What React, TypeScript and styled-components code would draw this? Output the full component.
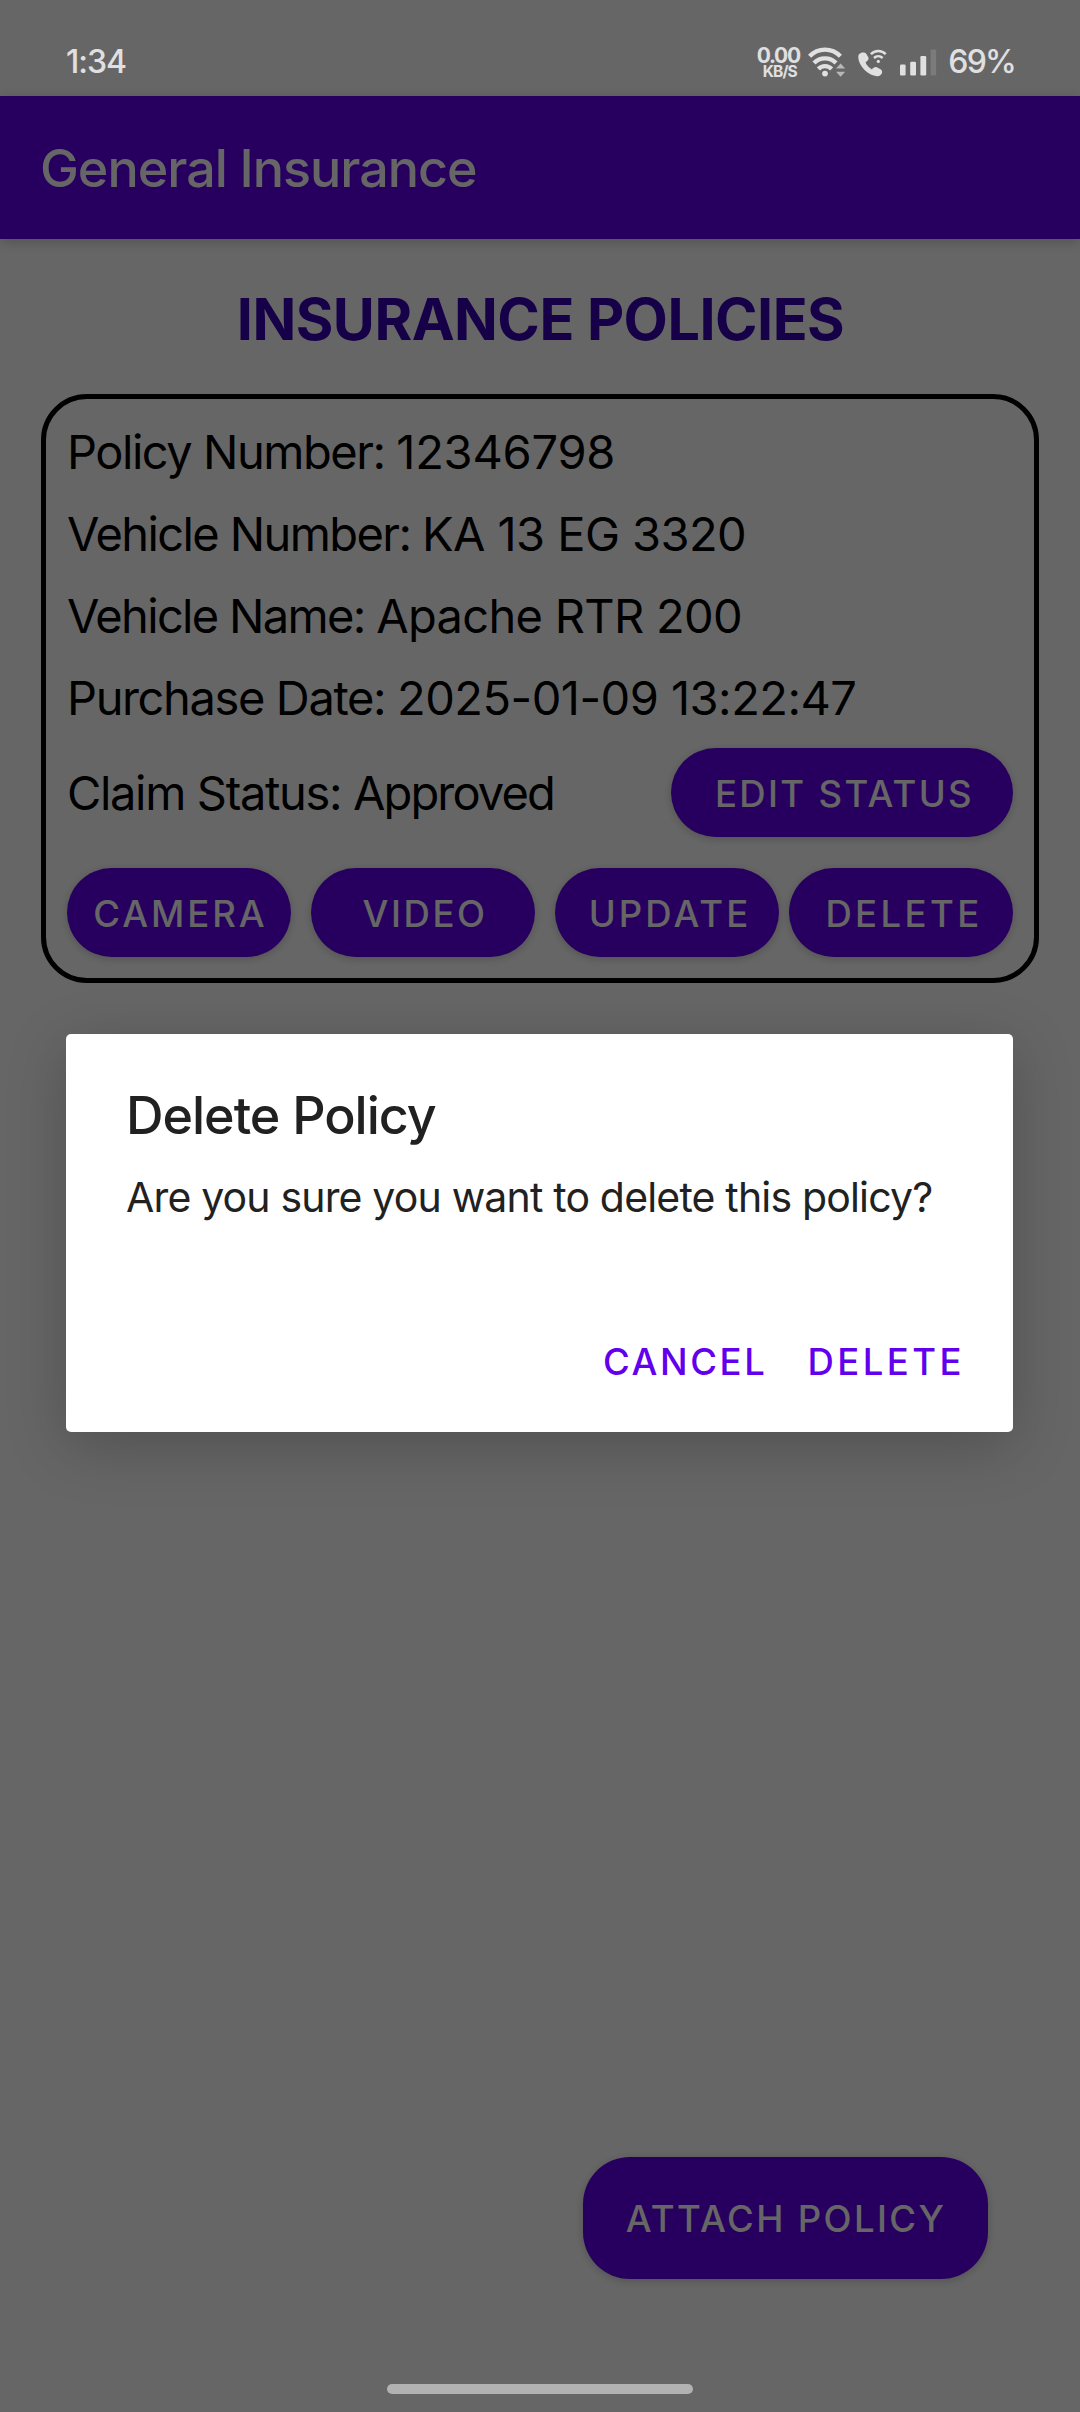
import React from "react";
import styled, { createGlobalStyle } from "styled-components";

const GlobalStyle = createGlobalStyle`
  * { box-sizing: border-box; }
  body { margin: 0; background: #fff; }
`;

const Screen = styled.div`
  position: relative;
  display: flex;
  flex-direction: column;
  width: 1080px;
  height: 2412px;
  overflow: hidden;
  background: #fff;
  color: #000;
  font-family: Inter, "Liberation Sans", sans-serif;
`;

const StatusBar = styled.header`
  position: relative;
  z-index: 2;
  display: flex;
  align-items: center;
  justify-content: space-between;
  height: 96px;
  padding: 27px 65px 0 66px;
  color: #e0e0e0;
`;

const StatusText = styled.span<{ $spacing: number }>`
  font-size: 32px;
  font-weight: 500;
  line-height: 40px;
  letter-spacing: ${(p) => p.$spacing}px;
  white-space: nowrap;
`;

const StatusIcons = styled.div`
  display: flex;
  align-items: center;
`;

const Speed = styled.div`
  display: flex;
  flex-direction: column;
  align-items: center;
  width: 44px;
  margin-right: 8px;
  padding-top: 3px;
  font-weight: 700;
  white-space: nowrap;
`;

const SpeedValue = styled.span`
  font-size: 21px;
  line-height: 16px;
  letter-spacing: -1.3px;
`;

const SpeedUnit = styled.span`
  padding-left: 3px;
  font-size: 15.5px;
  line-height: 15px;
  letter-spacing: -0.9px;
`;

const Icon = styled.svg<{ $after: number }>`
  display: block;
  flex: none;
  margin-right: ${(p) => p.$after}px;
`;

const AppBar = styled.div`
  display: flex;
  align-items: center;
  flex: none;
  height: 143px;
  padding: 1px 0 0 40px;
  background: #6200ee;
  box-shadow: 0 3px 12px rgba(0, 0, 0, 0.2);
`;

const AppTitle = styled.h1`
  margin: 0;
  color: #fff;
  font-size: 52px;
  font-weight: 500;
  letter-spacing: -1px;
  white-space: nowrap;
`;

const Heading = styled.h2`
  margin: 50px 0 45px;
  padding-left: 1px;
  color: #3700b3;
  font-size: 57.5px;
  font-weight: 700;
  line-height: 60px;
  letter-spacing: -0.52px;
  text-align: center;
  white-space: nowrap;
`;

const PolicyCard = styled.section`
  margin: 0 41px;
  padding: 12px 21px 21px;
  border: 5px solid #000;
  border-radius: 46px;
`;

const FieldLine = styled.div`
  font-size: 47px;
  line-height: 82px;
  white-space: pre;
`;

const FieldPart = styled.span<{ $spacing: number }>`
  letter-spacing: ${(p) => p.$spacing}px;
`;

const ClaimRow = styled.div`
  display: flex;
  align-items: center;
  justify-content: space-between;
  height: 89px;
  margin-top: 9px;
`;

const Actions = styled.div`
  display: grid;
  grid-template-columns: 224px 224px 224px 224px;
  column-gap: 20px;
  margin-top: 31px;

  & > :last-child {
    margin-left: -10px;
    margin-right: 10px;
  }
`;

const Button = styled.button<{ $spacing: number; $shift?: number; $width: number; $tall?: boolean }>`
  display: flex;
  align-items: center;
  justify-content: center;
  width: ${(p) => p.$width}px;
  height: ${(p) => (p.$tall ? 122 : 89)}px;
  padding: ${(p) => (p.$tall ? 1 : 2)}px 0 0 ${(p) => p.$shift ?? 0}px;
  border: 0;
  border-radius: ${(p) => (p.$tall ? 47 : 44.5)}px;
  background: #6200ee;
  box-shadow: 0 2px 8px rgba(0, 0, 0, 0.2);
  color: #fff;
  font-family: inherit;
  font-size: 36.5px;
  font-weight: 500;
  letter-spacing: ${(p) => p.$spacing}px;
  white-space: nowrap;
`;

const Footer = styled.footer`
  display: flex;
  justify-content: flex-end;
  margin-top: auto;
  padding: 0 92px 105px 0;
`;

const GestureBar = styled.div`
  position: relative;
  z-index: 2;
  flex: none;
  align-self: center;
  width: 306px;
  height: 10px;
  margin-bottom: 18px;
  border-radius: 5px;
  background: #b2b2b2;
`;

const Scrim = styled.div`
  position: absolute;
  inset: 0;
  z-index: 1;
  display: flex;
  align-items: center;
  justify-content: center;
  padding: 54px 1px 0 0;
  background: rgba(0, 0, 0, 0.6);
`;

const Dialog = styled.div`
  display: flex;
  flex-direction: column;
  width: 947px;
  height: 398px;
  padding: 51px 48px 45px 60px;
  border-radius: 5px;
  background: #fff;
  box-shadow: 0 14px 60px rgba(0, 0, 0, 0.21);
  color: #212121;
`;

const DialogTitle = styled.h3`
  margin: 0 0 25px;
  font-size: 52px;
  font-weight: 500;
  line-height: 62px;
  letter-spacing: -1.02px;
`;

const DialogMessage = styled.p`
  margin: 0;
  font-size: 41px;
  line-height: 50px;
  letter-spacing: -0.83px;
  white-space: nowrap;
`;

const DialogActions = styled.div`
  display: flex;
  justify-content: flex-end;
  gap: 40px;
  margin-top: auto;
`;

const TextButton = styled.button<{ $spacing: number }>`
  padding: 0;
  border: 0;
  background: none;
  color: #6200ee;
  font-family: inherit;
  font-size: 36.5px;
  font-weight: 500;
  line-height: 50px;
  letter-spacing: ${(p) => p.$spacing}px;
`;

type FieldData = { label: string; value: string; labelSpacing: number; valueSpacing: number };

const fields: FieldData[] = [
  { label: "Policy Number", value: "12346798", labelSpacing: -1.47, valueSpacing: -0.21 },
  { label: "Vehicle Number", value: "KA 13 EG 3320", labelSpacing: -1.59, valueSpacing: -0.57 },
  { label: "Vehicle Name", value: "Apache RTR 200", labelSpacing: -1.67, valueSpacing: -0.69 },
  { label: "Purchase Date", value: "2025-01-09 13:22:47", labelSpacing: -1.37, valueSpacing: -0.51 },
];

const claim: FieldData = {
  label: "Claim Status",
  value: "Approved",
  labelSpacing: -1.34,
  valueSpacing: -1.88,
};

const actions: { text: string; spacing: number; shift: number }[] = [
  { text: "CAMERA", spacing: 2.95, shift: 3 },
  { text: "VIDEO", spacing: 2.6, shift: 4 },
  { text: "UPDATE", spacing: 3.1, shift: 6 },
  { text: "DELETE", spacing: 3.4, shift: 6 },
];

const Field = ({ label, value, labelSpacing, valueSpacing }: FieldData) => (
  <FieldLine>
    <FieldPart $spacing={labelSpacing}>{label + ": "}</FieldPart>
    <FieldPart $spacing={valueSpacing}>{value}</FieldPart>
  </FieldLine>
);

const WifiIcon = () => (
  <Icon $after={12} width="38" height="30" viewBox="808 46 38 30" fill="none">
    <g stroke="#e0e0e0" strokeWidth="4.3">
      <path d="M809.6 55.3A21 21 0 0 1 840.4 55.3" />
      <path d="M814 62A15.2 15.2 0 0 1 836 62" />
      <path d="M818.4 68A9 9 0 0 1 831.6 68" />
    </g>
    <circle cx="825" cy="72.6" r="2.9" fill="#e0e0e0" />
    <path d="M836 67.4L840.6 62.4L845.2 67.4ZM836 70.8L840.6 75.8L845.2 70.8Z" fill="#b8b8b8" />
  </Icon>
);

const WifiCallIcon = () => (
  <Icon $after={13} width="29" height="30" viewBox="858 46 29 30" fill="none">
    <path
      d="M858.3 56C858 51.8 864 50.2 866.4 53L868.3 56.3C869.3 58.4 867.2 60.2 865.6 61.4C867 64.5 869 66.6 872 68.4C873.4 66.6 875.2 65.5 877.2 66.5L881 68.6C883.6 70.8 881.5 75.2 877.5 75.2C868 74.5 858.5 65 858.3 56Z"
      fill="#e0e0e0"
    />
    <g stroke="#e0e0e0" strokeWidth="2.5">
      <path d="M870.9 53.2A10.2 10.2 0 0 1 885.7 53.2" />
      <path d="M874 57A6.4 6.4 0 0 1 882.6 57" />
    </g>
    <circle cx="878.3" cy="60.4" r="1.6" fill="#e0e0e0" />
  </Icon>
);

const SignalIcon = () => (
  <Icon $after={11} width="37" height="30" viewBox="900 46 37 30" fill="#e0e0e0">
    <rect x="900" y="63.6" width="5.6" height="10.8" rx="1.2" />
    <rect x="910.2" y="60.8" width="5.8" height="13.6" rx="1.2" />
    <rect x="920.4" y="55" width="5.8" height="19.4" rx="1.2" />
    <rect x="930.6" y="48.4" width="5.6" height="26" rx="1.2" fill="#7b7b7b" />
  </Icon>
);

export default function App() {
  return (
    <>
      <GlobalStyle />
      <Screen>
        <StatusBar>
          <StatusText $spacing={-1.02}>1:34</StatusText>
          <StatusIcons>
            <Speed>
              <SpeedValue>0.00</SpeedValue>
              <SpeedUnit>KB/S</SpeedUnit>
            </Speed>
            <WifiIcon />
            <WifiCallIcon />
            <SignalIcon />
            <StatusText $spacing={-1.8}>69%</StatusText>
          </StatusIcons>
        </StatusBar>

        <AppBar>
          <AppTitle>General Insurance</AppTitle>
        </AppBar>

        <Heading>INSURANCE POLICIES</Heading>

        <PolicyCard>
          {fields.map((f) => (
            <Field key={f.label} {...f} />
          ))}
          <ClaimRow>
            <Field {...claim} />
            <Button $width={342} $spacing={2.35} $shift={5}>EDIT STATUS</Button>
          </ClaimRow>
          <Actions>
            {actions.map((a) => (
              <Button key={a.text} $width={224} $spacing={a.spacing} $shift={a.shift}>{a.text}</Button>
            ))}
          </Actions>
        </PolicyCard>

        <Footer>
          <Button $tall $width={405} $spacing={2.37} $shift={1}>ATTACH POLICY</Button>
        </Footer>
        <GestureBar />

        <Scrim>
          <Dialog role="dialog">
            <DialogTitle>Delete Policy</DialogTitle>
            <DialogMessage>Are you sure you want to delete this policy?</DialogMessage>
            <DialogActions>
              <TextButton $spacing={2.6}>CANCEL</TextButton>
              <TextButton $spacing={3.45}>DELETE</TextButton>
            </DialogActions>
          </Dialog>
        </Scrim>
      </Screen>
    </>
  );
}
